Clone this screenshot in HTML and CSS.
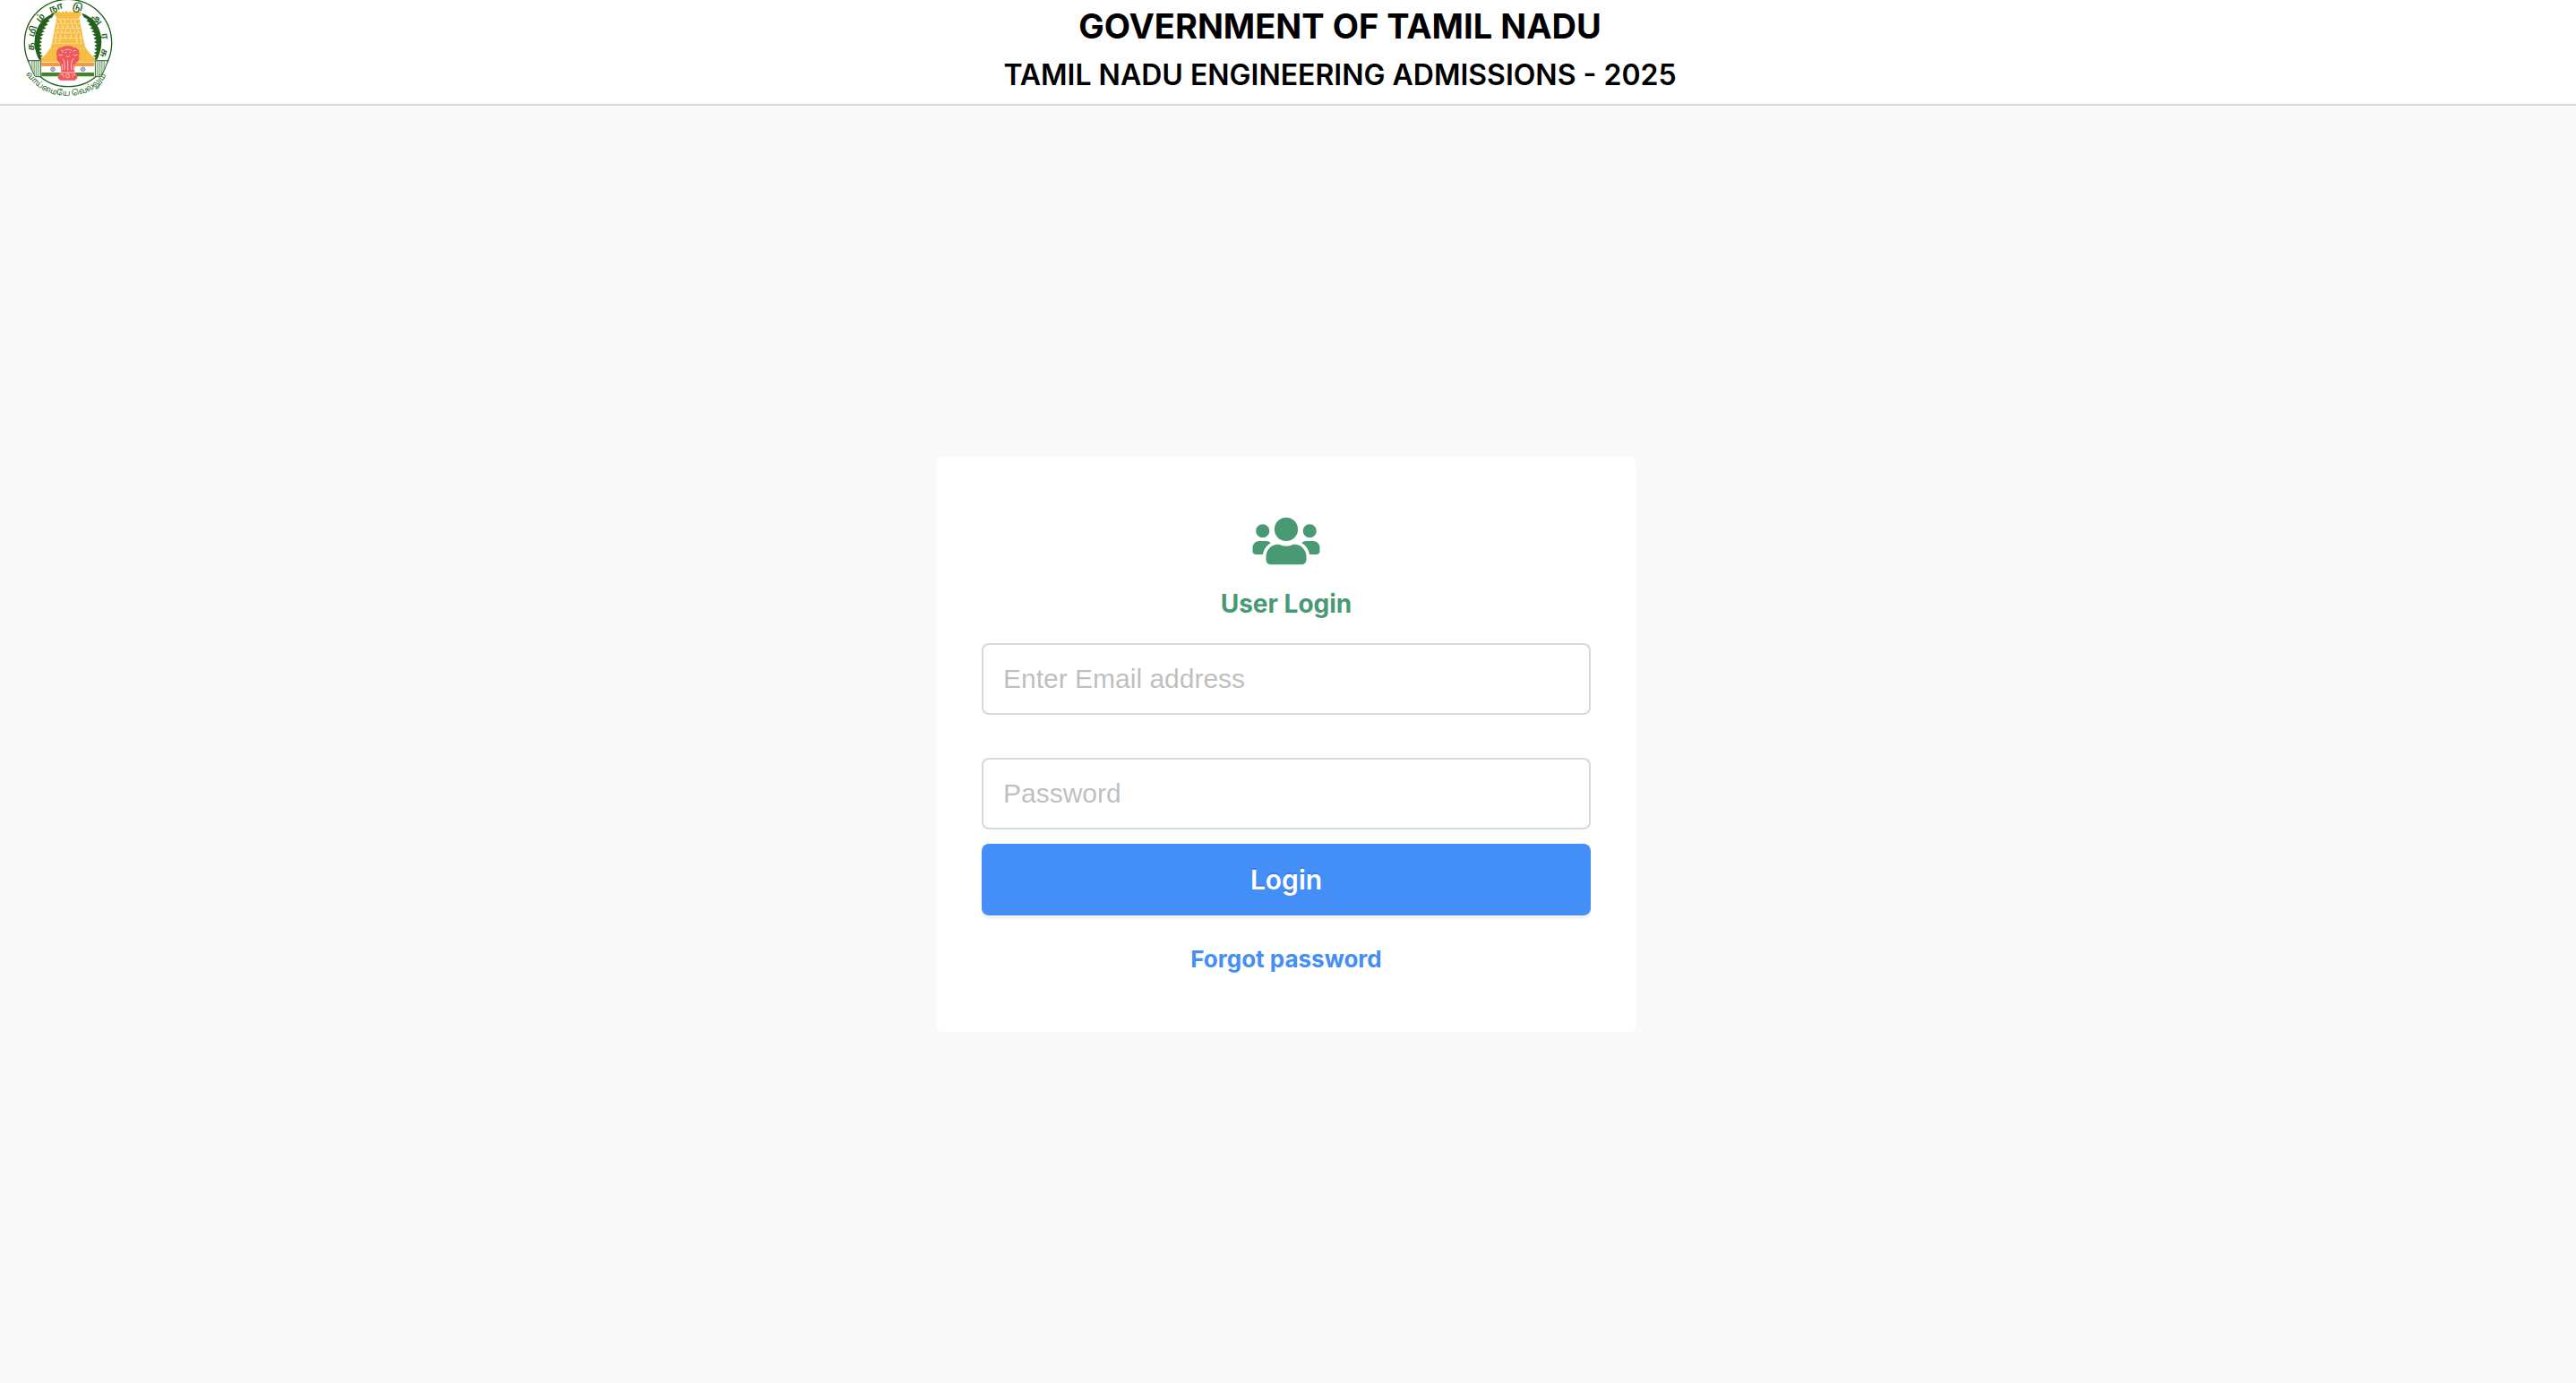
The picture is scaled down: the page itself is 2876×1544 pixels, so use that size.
FILE: index.html
```html
<!DOCTYPE html>
<html lang="en">

<head>
    <meta charset="UTF-8">
    <meta name="viewport" content="width=device-width, initial-scale=1.0">
    <title>Tamil Nadu Engineering Admissions - 2025</title>
    <link rel="stylesheet" href="styles.css">
</head>

<body>
    <header class="header">
        <svg class="header-logo" viewBox="79 0 300 330" role="img" aria-label="Government of Tamil Nadu emblem">
            <defs>
                <path id="ring-top" d="M121 183A115 115 0 1 1 317 218" />
                <path id="ring-bottom" d="M88 248Q140 320 228 320T364 244" />
            </defs>
            <circle cx="229" cy="144" r="146" fill="#fff" stroke="#23601c" stroke-width="4" />
            <!-- leaves -->
            <path d="M184 44C120 62 100 140 132 200L146 200 136 192 145 188 134 182 142 177 132 171 141 165 132 159 141 153 132 147 142 141 133 135 144 128 135 123 147 116 138 112 151 105 142 101 156 94 148 90 162 82 155 78 168 70 162 66 176 58Z" fill="#23601c" />
            <path d="M274 44C338 62 358 140 326 200L312 200 322 192 313 188 324 182 316 177 326 171 317 165 326 159 317 153 326 147 316 141 325 135 314 128 323 123 311 116 320 112 307 105 316 101 302 94 310 90 296 82 303 78 290 70 296 66 282 58Z" fill="#23601c" />
            <!-- gopuram -->
            <path d="M184 50V38L189 35 194 41 200 38 206 42 212 37 218 42 224 36 230 42 236 38 242 42 248 37 254 42 260 38 266 40 271 36V52L266 58 269 74 276 108 280 130 286 157 300 176 318 196V208H140V196L158 178 172 157 178 130 182 108 188 74 191 58Z" fill="#f6bd42" />
            <g stroke="#fff" stroke-width="2" fill="none">
                <path d="M192 64H266" stroke-dasharray="12 3" />
                <path d="M190 79H268" stroke-dasharray="8 4" />
                <path d="M187 94H271" stroke-dasharray="14 3" />
                <path d="M184 110H274" stroke-dasharray="7 3" />
                <path d="M181 128H278" stroke-dasharray="13 4" />
                <path d="M178 145H280" stroke-dasharray="6 4" />
                <path d="M170 163H288" stroke-dasharray="3 7" />
                <path d="M190 70V76M204 66V76M218 66V76M238 66V76M252 66V76M196 83V91M210 83V91M226 83V91M244 83V91M258 83V91M193 99V107M207 99V107M221 99V107M236 99V107M251 99V107M263 99V107M189 115V125M204 115V125M219 115V125M240 115V125M256 115V125M270 115V125M187 133V142M200 133V142M258 133V142M272 133V142" />
            </g>
            <!-- side walls -->
            <path d="M96 203H138V257H119Q103 230 96 203ZM362 203H320V257H339Q355 230 362 203Z" fill="#fff" stroke="#23601c" stroke-width="3" />
            <path d="M107 204V235M112 204V245M117 204V252M122 204V256M127 204V256M132 204V256M326 204V256M331 204V256M336 204V256M341 204V252M346 204V245M351 204V235" stroke="#3f7a38" stroke-width="2" />
            <!-- flag -->
            <path d="M140 209H316V222H140Z" fill="#f19a44" />
            <path d="M140 222H316V243H140Z" fill="#fff" />
            <path d="M140 243H316V256H140Z" fill="#3d8a25" />
            <g fill="none" stroke="#4a4cae" stroke-width="2">
                <circle cx="178" cy="232" r="7" />
                <circle cx="279" cy="232" r="7" />
                <path d="M171 232H185M178 225V239M173 227L183 237M183 227L173 237M272 232H286M279 225V239M274 227L284 237M284 227L274 237" stroke-width="1" />
            </g>
            <!-- lion capital -->
            <path d="M228 154C216 152 208 161 201 160C190 164 188 181 192 190C188 197 195 209 203 211L206 240 195 251V262L203 269H252L260 262V251L250 240 253 211C263 208 269 197 265 188C270 175 265 164 254 160C247 161 240 152 228 154Z" fill="#f0575c" />
            <g fill="none" stroke="#fff" stroke-width="2">
                <path d="M205 169Q211 166 212 175M216 170Q228 160 241 170M246 174Q248 166 256 170M219 176H223M234 176H238M222 187Q228 193 235 187M197 183Q205 190 211 182M246 183Q254 190 262 182M210 196Q218 200 217 216V234M240 234V214Q240 200 249 195M228 202V236M209 216V235M248 216V235M204 243H252" />
                <circle cx="228" cy="254" r="6" />
                <path d="M204 250Q214 246 215 260M243 260Q244 246 253 251" />
            </g>
            <g class="logo-text">
                <g font-size="31" text-anchor="middle">
                    <text><textPath href="#ring-top" startOffset="6%">த</textPath></text>
                    <text><textPath href="#ring-top" startOffset="16%">மி</textPath></text>
                    <text><textPath href="#ring-top" startOffset="26%">ழ்</textPath></text>
                    <text><textPath href="#ring-top" startOffset="38%">நா</textPath></text>
                    <text><textPath href="#ring-top" startOffset="52%">டு</textPath></text>
                    <text><textPath href="#ring-top" startOffset="67%">அ</textPath></text>
                    <text><textPath href="#ring-top" startOffset="79%">ர</textPath></text>
                    <text><textPath href="#ring-top" startOffset="90%">சு</textPath></text>
                </g>
                <text class="logo-motto" font-size="27"><textPath href="#ring-bottom">வாய்மையே வெல்லும்</textPath></text>
            </g>
        </svg>
        <div class="header-titles">
            <h1>GOVERNMENT OF TAMIL NADU</h1>
            <h2>TAMIL NADU ENGINEERING ADMISSIONS - 2025</h2>
        </div>
    </header>

    <main class="login-page">
        <form class="login-card">
            <svg class="login-icon" viewBox="0 0 640 512" aria-hidden="true">
                <path fill="currentColor" d="M96 224c35.300 0 64-28.700 64-64s-28.700-64-64-64-64 28.700-64 64 28.700 64 64 64zm448 0c35.300 0 64-28.700 64-64s-28.700-64-64-64-64 28.700-64 64 28.700 64 64 64zm32 32h-64c-17.600 0-33.500 7.100-45.100 18.600 40.300 22.100 68.900 62 75.100 109.400h66c17.700 0 32-14.300 32-32v-32c0-35.300-28.700-64-64-64zm-256 0c61.900 0 112-50.100 112-112S381.900 32 320 32 208 82.100 208 144s50.100 112 112 112zm76.800 32h-8.300c-20.800 10-43.900 16-68.500 16s-47.600-6-68.500-16h-8.300C179.600 288 128 339.600 128 403.200V432c0 26.500 21.500 48 48 48h288c26.500 0 48-21.500 48-48v-28.800c0-63.600-51.600-115.200-115.200-115.200zm-223.700-13.400C161.500 263.100 145.600 256 128 256H64c-35.300 0-64 28.700-64 64v32c0 17.700 14.300 32 32 32h65.900c6.300-47.400 34.900-87.300 75.200-109.400z" />
            </svg>
            <h3 class="login-title">User Login</h3>
            <input class="login-input" type="email" name="email" placeholder="Enter Email address" aria-label="Email address">
            <input class="login-input" type="password" name="password" placeholder="Password" aria-label="Password">
            <button class="login-button" type="submit">Login</button>
            <a class="forgot-link" href="#">Forgot password</a>
        </form>
    </main>
</body>

</html>
```

FILE: styles.css
```css
* {
    box-sizing: border-box;
}

body {
    display: flex;
    flex-direction: column;
    min-height: 100vh;
    margin: 0;
    background: #f9f9f9;
    color: #000;
    font-family: Inter, "Liberation Sans", sans-serif;
}

h1,
h2,
h3 {
    margin: 0;
    font-weight: 700;
}

.header {
    display: flex;
    align-items: flex-start;
    padding: 0 10px 6px 26px;
    border-bottom: 2px solid #d9d9d9;
    background: #fff;
}

.header-logo {
    width: 100px;
    height: 110px;
}

.logo-text {
    fill: #23601c;
    font-family: "Noto Sans Tamil", "Noto Sans", sans-serif;
    font-weight: 600;
}

.logo-motto {
    font-weight: normal;
}

.header-titles {
    flex: 1;
    text-align: center;
}

.header-titles h1 {
    font-size: 38px;
    line-height: 58px;
}

.header-titles h2 {
    font-size: 32px;
    font-weight: 600;
    line-height: 52px;
}

.login-page {
    display: flex;
    flex: 1;
    align-items: center;
    justify-content: center;
    padding-right: 4px;
}

.login-card {
    display: flex;
    flex-direction: column;
    align-items: center;
    width: 100%;
    max-width: 780px;
    padding: 64px 50px 60px;
    border-radius: 8px;
    background: #fff;
}

.login-icon {
    width: 76px;
    height: 60px;
    color: #489974;
}

.login-title {
    margin: 20px 0 24px;
    color: #489974;
    font-size: 28px;
    line-height: 40px;
}

.login-input {
    width: 100%;
    height: 80px;
    padding: 0 22px;
    border: 2px solid #d9d9d9;
    border-radius: 8px;
    background: #fff;
    font-family: "Liberation Sans", Arial, sans-serif;
    font-size: 30px;
}

.login-input + .login-input {
    margin-top: 48px;
}

.login-input::placeholder {
    color: #bfbfbf;
}

.login-button {
    width: 100%;
    height: 80px;
    margin: 16px 0 28px;
    border: 0;
    border-radius: 8px;
    background: #448ef7;
    box-shadow: 0 4px 0 rgba(0, 0, 0, 0.045);
    color: #fff;
    font-family: inherit;
    font-size: 30px;
    font-weight: 600;
    text-shadow: 0 -2px 0 rgba(0, 0, 0, 0.12);
    cursor: pointer;
}

.forgot-link {
    color: #448ef7;
    font-size: 26px;
    font-weight: 700;
    line-height: 42px;
    text-decoration: none;
}
```
